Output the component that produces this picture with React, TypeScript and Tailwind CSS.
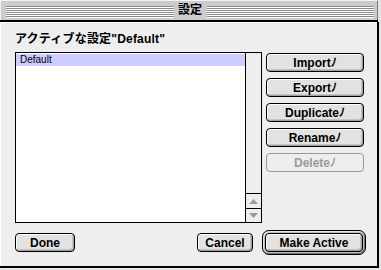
import React from "react";

const FONT = "font-['Liberation_Sans','Noto_Sans_CJK_JP',sans-serif]";

function Stripes() {
  return (
    <div className="flex-1 flex flex-col gap-[1px] pt-[1px]">
      {[0, 1, 2, 3, 4, 5].map((i) => (
        <div key={i} className="h-[1px] bg-[#8a8a8a] shadow-[0_1px_0_#ffffff]" />
      ))}
    </div>
  );
}

function Btn({ label, disabled, w, className = "" }: { label: string; disabled?: boolean; w: string; className?: string }) {
  return (
    <div
      className={`${w} h-[19px] rounded-[4px] border flex items-center justify-center text-[12px] font-bold leading-none ${
        disabled
          ? "border-[#9a9a9a] text-[#9a9a9a] bg-[#eeeeee]"
          : "border-black text-black bg-[#e2e2e2] shadow-[inset_1px_1px_0_#ffffff,inset_-1px_-1px_0_#a0a0a0,inset_-2px_-2px_0_#c4c4c4]"
      } ${className}`}
    >
      {label}
    </div>
  );
}

export default function App() {
  return (
    <div className={`w-[381px] h-[270px] bg-[#e4e4e4] flex flex-col ${FONT}`}>
      {/* title bar */}
      <div className="h-[20px] mr-[3px] bg-[#cccccc] border-t border-l border-[#f4f4f4] border-r border-r-[#7a7a7a] flex items-center pl-[5px] pr-[3px]">
        <Stripes />
        <div className="w-[33px] text-center text-[12px] font-bold leading-none pb-[1px] text-black">設定</div>
        <Stripes />
      </div>
      <div className="h-[2px] mr-[3px] bg-black" />
      {/* content */}
      <div className="h-[246px] mr-[2px] bg-[#eeeeee] border-r-2 border-b-2 border-black shadow-[inset_1px_1px_0_#ffffff] flex flex-col pl-[15px]">
        <div className="h-[14px] mt-[10px] text-[12px] font-bold leading-[14px] tracking-[0.2px] text-black">アクティブな設定"Default"</div>
        <div className="flex mt-[6px] h-[172px]">
          {/* list */}
          <div className="w-[247px] h-[171px] border border-black bg-white flex">
            <div className="flex-1 pt-[1px]">
              <div className="h-[12px] bg-[#ccccff] text-[10px] leading-[12px] pl-[4px] text-black">Default</div>
            </div>
            <div className="w-[16px] border-l border-black bg-[#eeeeee] flex flex-col justify-end">
              <div className="h-[15px] border-t border-black flex items-center justify-center">
                <svg width="9" height="5" viewBox="0 0 9 5"><polygon points="4.5,0 9,5 0,5" fill="#9a9a9a" /></svg>
              </div>
              <div className="h-[14px] border-t border-black flex items-center justify-center">
                <svg width="9" height="5" viewBox="0 0 9 5"><polygon points="0,0 9,0 4.5,5" fill="#9a9a9a" /></svg>
              </div>
            </div>
          </div>
          {/* side buttons */}
          <div className="ml-[4px] pt-[1px] flex flex-col gap-[6px]">
            <Btn w="w-[98px]" label="Importﾉ" />
            <Btn w="w-[98px]" label="Exportﾉ" />
            <Btn w="w-[98px]" label="Duplicateﾉ" />
            <Btn w="w-[98px]" label="Renameﾉ" />
            <Btn w="w-[98px]" label="Deleteﾉ" disabled />
          </div>
        </div>
        {/* bottom buttons */}
        <div className="flex items-center mt-[6px] pr-[11px]">
          <Btn w="w-[60px]" label="Done" />
          <div className="flex-1" />
          <Btn w="w-[56px]" label="Cancel" className="mr-[9px]" />
          <div className="rounded-[7px] border border-black bg-[#bdbdbd] p-[2px] shadow-[inset_1px_1px_0_#e8e8e8,inset_-1px_-1px_0_#777777]">
            <div className="rounded-[5px]">
              <Btn w="w-[98px]" label="Make Active" />
            </div>
          </div>
        </div>
      </div>
    </div>
  );
}
